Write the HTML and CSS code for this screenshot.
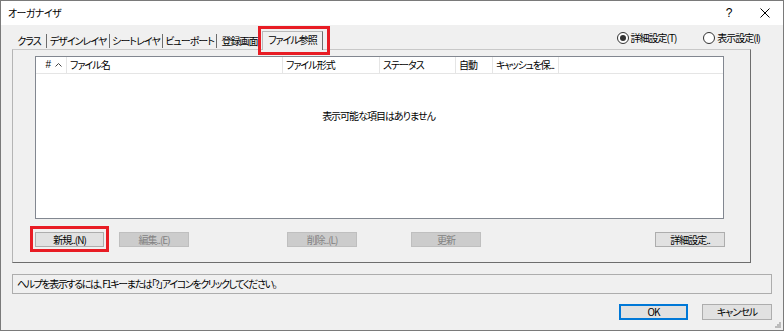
FILE: index.html
```html
<!DOCTYPE html>
<html lang="ja">
<head>
<meta charset="utf-8">
<title>オーガナイザ</title>
<link rel="stylesheet" href="styles.css">
</head>
<body>
<div class="window">
  <div class="titlebar">
    <span class="title">オーガナイザ</span>
    <span class="cap-btn">?</span>
    <span class="cap-btn">
      <svg width="10" height="10" viewBox="0 0 10 10"><path d="M0.5 0.5L9.5 9.5M9.5 0.5L0.5 9.5" stroke="#000" stroke-width="1" fill="none"/></svg>
    </span>
  </div>
  <div class="client">
    <div class="tabrow">
      <div class="tabs">
        <span class="tab">クラス</span>
        <span class="tab">デザインレイヤ</span>
        <span class="tab">シートレイヤ</span>
        <span class="tab">ビューポート</span>
        <span class="tab">登録画面</span>
        <span class="tab active">ファイル参照<span class="mark mark-tab"></span></span>
      </div>
      <div class="radios">
        <span class="radio"><span class="rb on"></span>詳細設定(T)</span>
        <span class="radio"><span class="rb"></span>表示設定(I)</span>
      </div>
    </div>
    <div class="panel">
      <div class="list">
        <div class="lhead">
          <div class="col c-num">#<svg class="sort" width="7" height="4" viewBox="0 0 7 4"><path d="M0.5 3.5L3.5 0.5L6.5 3.5" stroke="#444" fill="none"/></svg></div>
          <div class="col c-name">ファイル名</div>
          <div class="col c-type">ファイル形式</div>
          <div class="col c-stat">ステータス</div>
          <div class="col c-auto">自動</div>
          <div class="col c-cache">キャッシュを保...</div>
        </div>
        <div class="lbody">表示可能な項目はありません</div>
      </div>
      <div class="btnrow">
        <span class="btn b-new">新規..(N)<span class="mark mark-btn"></span></span>
        <span class="btn disabled b-edit">編集..(E)</span>
        <span class="btn disabled b-del">削除..(L)</span>
        <span class="btn disabled b-upd">更新</span>
        <span class="btn b-adv">詳細設定..</span>
      </div>
    </div>
    <div class="helpbox">ヘルプを表示するには、F1キーまたは「?」アイコンをクリックしてください。</div>
    <div class="footer">
      <span class="btn default">OK</span>
      <span class="btn">キャンセル</span>
    </div>
  </div>
  <svg class="grip" width="6" height="6" viewBox="0 0 6 6">
    <rect x="4" y="0" width="2" height="2" fill="#bcbcbc"/>
    <rect x="2" y="2" width="2" height="2" fill="#bcbcbc"/>
    <rect x="4" y="2" width="2" height="2" fill="#bcbcbc"/>
    <rect x="0" y="4" width="2" height="2" fill="#bcbcbc"/>
    <rect x="2" y="4" width="2" height="2" fill="#bcbcbc"/>
    <rect x="4" y="4" width="2" height="2" fill="#bcbcbc"/>
  </svg>
</div>
</body>
</html>
```
FILE: styles.css
```css
* { box-sizing: border-box; }
html, body { margin: 0; padding: 0; }
body {
  width: 784px;
  height: 331px;
  overflow: hidden;
  background: #ffffff;
  font-family: "Noto Sans CJK JP", "Noto Sans", sans-serif;
  font-size: 10px;
  letter-spacing: -1px;
  font-feature-settings: "palt";
  line-height: 1;
  color: #000;
}
.window {
  position: relative;
  width: 784px;
  height: 331px;
  border: 1px solid #7a7a7a;
  background: #f0f0f0;
  display: flex;
  flex-direction: column;
}
.titlebar {
  height: 24px;
  flex: none;
  background: #ffffff;
  display: flex;
  align-items: center;
  padding-left: 7px;
}
.title { flex: 1; letter-spacing: -0.6px; }
.cap-btn {
  width: 36px;
  height: 24px;
  display: flex;
  align-items: center;
  justify-content: center;
  font-family: "Liberation Sans", sans-serif;
  font-size: 12px;
  letter-spacing: 0;
}
.client {
  flex: 1;
  display: flex;
  flex-direction: column;
  padding: 0 11px;
}
.tabrow {
  height: 24px;
  flex: none;
  display: flex;
  align-items: flex-end;
  position: relative;
  z-index: 2;
}
.tabs {
  display: grid;
  grid-template-columns: 35px 63px 53px 54px 45px 61px;
  align-items: end;
}
.tab {
  height: 14px;
  margin-bottom: 1px;
  border-right: 1px solid #6d6d6d;
  display: flex;
  align-items: center;
  justify-content: center;
  white-space: nowrap;
}
.tab:has(+ .active) { border-right: 0; }
.tab.active {
  position: relative;
  height: 19px;
  margin-bottom: -1px;
  border: 1px solid #b9b9b9;
  border-right-color: #6d6d6d;
  border-bottom: 0;
  background: #f0f0f0;
  padding-bottom: 2px;
}
.mark {
  position: absolute;
  border: 3px solid #e81c24;
  pointer-events: none;
}
.mark-tab { left: -5px; top: -6px; width: 72px; height: 29px; }
.radios {
  align-self: flex-start;
  margin-top: 7px;
  margin-left: auto;
  margin-right: 12px;
  display: flex;
  gap: 27px;
}
.radio {
  display: flex;
  align-items: center;
  gap: 2px;
  white-space: nowrap;
}
.rb {
  width: 12px;
  height: 12px;
  border: 1px solid #333;
  border-radius: 50%;
  background: #fff;
  display: flex;
  align-items: center;
  justify-content: center;
}
.rb.on::after {
  content: "";
  width: 6px;
  height: 6px;
  border-radius: 50%;
  background: #333;
}
.panel {
  width: 739px;
  height: 214px;
  flex: none;
  border: 1px solid;
  border-color: #c8c8c8 #6d6d6d #6d6d6d #b4b4b4;
  padding: 6px 26px 0 22px;
  display: flex;
  flex-direction: column;
}
.list {
  height: 163px;
  border: 1px solid #828790;
  background: #ffffff;
  display: flex;
  flex-direction: column;
}
.lhead {
  height: 17px;
  flex: none;
  display: flex;
  border-bottom: 1px solid #e5e5e5;
}
.col {
  border-right: 1px solid #e5e5e5;
  display: flex;
  align-items: center;
  padding-left: 3px;
  white-space: nowrap;
  overflow: hidden;
}
.c-num { width: 31px; justify-content: flex-end; padding-right: 4px; gap: 4px; font-family: "Liberation Sans", sans-serif; font-size: 10px; letter-spacing: 0; }
.c-name { width: 216px; }
.c-type { width: 97px; }
.c-stat { width: 76px; }
.c-auto { width: 37px; }
.c-cache { width: 66px; letter-spacing: -1.3px; }
.lbody {
  flex: 1;
  text-align: center;
  padding-top: 37px;
  padding-right: 2px;
}
.btnrow {
  margin-top: 13px;
  display: flex;
}
.btn {
  position: relative;
  width: 70px;
  height: 15px;
  border: 1px solid #adadad;
  background: #e1e1e1;
  display: flex;
  align-items: center;
  justify-content: center;
  white-space: nowrap;
}
.btn.disabled {
  background: #cccccc;
  border-color: #bfbfbf;
  color: #838383;
}
.b-new { width: 69px; }
.b-edit { margin-left: 15px; }
.b-del { margin-left: 98px; }
.b-upd { margin-left: 54px; }
.b-adv { margin-left: auto; margin-right: -1px; }
.mark-btn { left: -6px; top: -7px; width: 79px; height: 26px; }
.helpbox {
  margin-top: 11px;
  height: 20px;
  flex: none;
  border: 1px solid #adadad;
  display: flex;
  align-items: center;
  padding-left: 4px;
  white-space: nowrap;
  letter-spacing: -1.4px;
}
.footer {
  margin-top: 10px;
  display: flex;
  justify-content: flex-end;
  gap: 14px;
}
.footer .btn { height: 16px; }
.btn.default {
  border-color: #0078d7;
  box-shadow: inset 0 0 0 1px #0078d7;
  width: 69px;
}
.grip {
  position: absolute;
  right: 2px;
  bottom: 2px;
}
```
